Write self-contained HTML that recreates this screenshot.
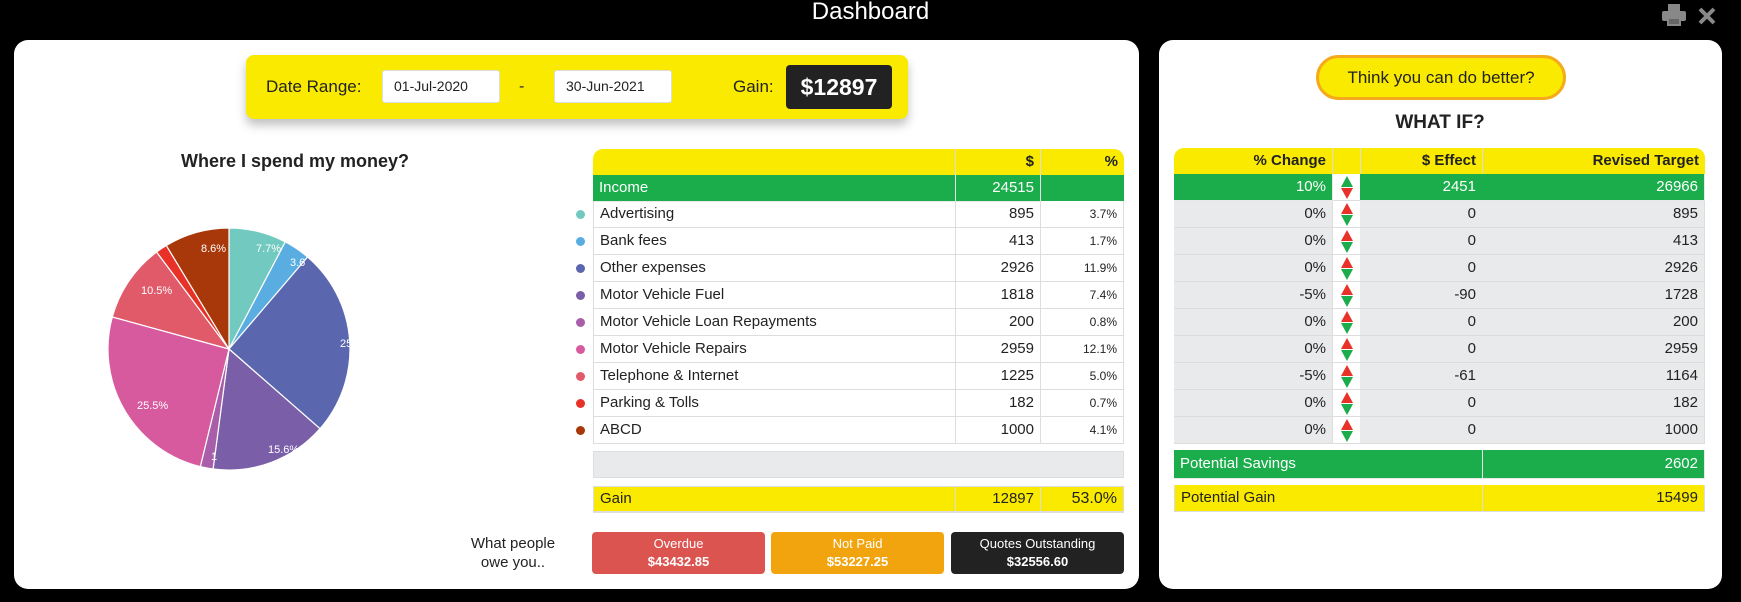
<!DOCTYPE html>
<html><head><meta charset="utf-8"><style>
*{box-sizing:border-box;margin:0;padding:0}
body{width:1741px;height:602px;background:#000;font-family:"Liberation Sans",sans-serif;color:#222;position:relative;overflow:hidden}
.abs{position:absolute}
.panel{position:absolute;background:#fff;border-radius:14px}
.t{position:absolute;font-size:15px;line-height:27px;white-space:nowrap}
.cell{position:absolute;border-right:1px solid #ddd;border-bottom:1px solid #ddd;font-size:15px;line-height:26px;padding:0 6px;white-space:nowrap;overflow:hidden}
.r{text-align:right}
.dot{position:absolute;width:9px;height:9px;border-radius:50%}
.btn{position:absolute;border-radius:4px;color:#fff;text-align:center;font-size:13px;line-height:18px;padding-top:3px}
</style></head><body>
<div class="abs" style="left:0;width:1741px;top:0;text-align:center;color:#fff;font-size:24px;line-height:24px">Dashboard</div>
<svg class="abs" style="left:1662px;top:4px" width="24" height="22" viewBox="0 0 24 22"><rect x="6" y="0" width="12" height="7" fill="#888"/><rect x="0" y="7" width="24" height="10" rx="2" fill="#888"/><rect x="5" y="13" width="14" height="9" fill="#888"/><rect x="7" y="15" width="10" height="5" fill="#000" opacity=".25"/></svg>
<svg class="abs" style="left:1698px;top:7px" width="18" height="18" viewBox="0 0 18 18"><path d="M2 2L16 16M16 2L2 16" stroke="#888" stroke-width="4"/></svg>

<div class="panel" style="left:14px;top:40px;width:1125px;height:549px"></div>
<div class="panel" style="left:1159px;top:40px;width:563px;height:549px"></div>

<div class="abs" style="left:246px;top:55px;width:662px;height:64px;background:#f9ea00;border-radius:8px;box-shadow:0 6px 10px rgba(0,0,0,.25)"></div>
<div class="t" style="left:266px;top:73px;font-size:17px">Date Range:</div>
<div class="abs" style="left:382px;top:70px;width:118px;height:33px;background:#fff;border:1px solid #ddd;border-radius:3px;font-size:14px;line-height:31px;padding-left:11px">01-Jul-2020</div>
<div class="t" style="left:519px;top:73px;font-size:16px">-</div>
<div class="abs" style="left:554px;top:70px;width:118px;height:33px;background:#fff;border:1px solid #ddd;border-radius:3px;font-size:14px;line-height:31px;padding-left:11px">30-Jun-2021</div>
<div class="t" style="left:733px;top:73px;font-size:17px">Gain:</div>
<div class="abs" style="left:786px;top:65px;width:106px;height:44px;background:#222;border-radius:4px;color:#fff;font-size:23px;font-weight:bold;line-height:44px;text-align:center">$12897</div>

<div class="abs" style="left:120px;top:151px;width:350px;text-align:center;font-size:18px;font-weight:bold">Where I spend my money?</div>

<svg class="abs" style="left:90px;top:210px;overflow:hidden" width="262" height="270" viewBox="90 210 262 270">
<g stroke="#fff" stroke-width="1.2">
<path d="M229 349L229 228A121 121 0 0 1 285.3 241.9Z" fill="#72c9c0"/>
<path d="M229 349L285.3 241.9A121 121 0 0 1 307.6 257Z" fill="#5aade0"/>
<path d="M229 349L307.6 257A121 121 0 0 1 320 428.7Z" fill="#5a67ae"/>
<path d="M229 349L320 428.7A121 121 0 0 1 213.1 469Z" fill="#7a5ea8"/>
<path d="M229 349L213.1 469A121 121 0 0 1 200.3 466.6Z" fill="#a85ea8"/>
<path d="M229 349L200.3 466.6A121 121 0 0 1 112.3 317Z" fill="#d85a9e"/>
<path d="M229 349L112.3 317A121 121 0 0 1 156.6 252Z" fill="#e05a6a"/>
<path d="M229 349L156.6 252A121 121 0 0 1 166.3 245.5Z" fill="#e83228"/>
<path d="M229 349L166.3 245.5A121 121 0 0 1 229 228Z" fill="#a8380a"/>
</g>
<g fill="#fff" font-size="11" font-family="Liberation Sans,sans-serif">
<text x="201" y="252">8.6%</text><text x="256" y="252">7.7%</text><text x="290" y="266">3.6</text>
<text x="340" y="347">25.2%</text><text x="268" y="453">15.6%</text><text x="211" y="460">1</text>
<text x="137" y="409">25.5%</text><text x="141" y="294">10.5%</text>
</g></svg>

<div class="abs" style="left:593px;top:149px;width:531px;height:26px;background:#f9ea00;border-radius:10px 10px 0 0"></div>
<div class="abs" style="left:955px;top:149px;width:1px;height:26px;background:#ddd"></div>
<div class="abs" style="left:1040px;top:149px;width:1px;height:26px;background:#ddd"></div>
<div class="t r" style="left:955px;width:79px;top:149px;line-height:26px;font-weight:bold">$</div>
<div class="t r" style="left:1040px;width:78px;top:149px;line-height:26px;font-weight:bold">%</div>
<div class="abs" style="left:593px;top:175px;width:531px;height:26px;background:#1bad4b"></div>
<div class="cell" style="left:593px;top:175px;width:363px;color:#fff;border-color:#e8e8e8">Income</div>
<div class="cell r" style="left:955px;top:175px;width:86px;color:#fff;border-color:#e8e8e8">24515</div>
<div id="lt"></div>

<div class="abs" style="left:593px;top:451px;width:531px;height:27px;background:#e9eaeb;border:1px solid #ddd"></div>
<div class="abs" style="left:593px;top:486px;width:531px;height:26px;background:#f9ea00;border:1px solid #ddd"></div>
<div class="cell" style="left:593px;top:486px;width:363px;border-left:1px solid #ddd">Gain</div>
<div class="cell r" style="left:955px;top:486px;width:86px">12897</div>
<div class="cell r" style="left:1040px;top:486px;width:84px;font-size:16px">53.0%</div>

<div class="abs" style="left:440px;top:534px;width:146px;text-align:center;font-size:15px;line-height:19px">What people<br>owe you..</div>
<div class="btn" style="left:592px;top:532px;width:173px;height:42px;background:#dc5450">Overdue<br><b>$43432.85</b></div>
<div class="btn" style="left:771px;top:532px;width:173px;height:42px;background:#f1a40d">Not Paid<br><b>$53227.25</b></div>
<div class="btn" style="left:951px;top:532px;width:173px;height:42px;background:#222">Quotes Outstanding<br><b>$32556.60</b></div>

<div class="abs" style="left:1316px;top:55px;width:250px;height:45px;background:#f9ea00;border:3px solid #f5aa1c;border-radius:23px;text-align:center;font-size:17px;line-height:39px">Think you can do better?</div>
<div class="abs" style="left:1340px;top:112px;width:200px;text-align:center;font-size:19px;font-weight:bold">WHAT IF?</div>

<div class="abs" style="left:1174px;top:148px;width:531px;height:26px;background:#f9ea00;border-radius:10px 10px 0 0"></div>
<div class="abs" style="left:1332px;top:148px;width:1px;height:26px;background:#ddd"></div>
<div class="abs" style="left:1360px;top:148px;width:1px;height:26px;background:#ddd"></div>
<div class="abs" style="left:1482px;top:148px;width:1px;height:26px;background:#ddd"></div>
<div class="t r" style="left:1174px;width:152px;top:148px;line-height:26px;font-weight:bold">% Change</div>
<div class="t r" style="left:1360px;width:116px;top:148px;line-height:26px;font-weight:bold">$ Effect</div>
<div class="t r" style="left:1482px;width:217px;top:148px;line-height:26px;font-weight:bold">Revised Target</div>
<div id="rt"></div>

<div class="abs" style="left:1174px;top:450px;width:531px;height:28px;background:#1bad4b"></div>
<div class="cell" style="left:1174px;top:450px;width:309px;color:#fff;line-height:28px;border-color:#e8e8e8">Potential Savings</div>
<div class="cell r" style="left:1482px;top:450px;width:223px;color:#fff;line-height:28px;border-color:#e8e8e8">2602</div>
<div class="abs" style="left:1174px;top:485px;width:531px;height:27px;background:#f9ea00"></div>
<div class="cell" style="left:1174px;top:485px;width:309px;border-left:1px solid #ddd">Potential Gain</div>
<div class="cell r" style="left:1482px;top:485px;width:223px">15499</div>

<script>
var L=[["Advertising",895,"3.7%","#72c9c0"],["Bank fees",413,"1.7%","#5aade0"],["Other expenses",2926,"11.9%","#5a67ae"],["Motor Vehicle Fuel",1818,"7.4%","#7a5ea8"],["Motor Vehicle Loan Repayments",200,"0.8%","#a85ea8"],["Motor Vehicle Repairs",2959,"12.1%","#d85a9e"],["Telephone & Internet",1225,"5.0%","#e05a6a"],["Parking & Tolls",182,"0.7%","#e83228"],["ABCD",1000,"4.1%","#a8380a"]];
var h="";
L.forEach(function(r,i){var y=201+i*27;
h+='<div class="dot" style="left:576px;top:'+(y+9)+'px;background:'+r[3]+'"></div>';
h+='<div class="cell" style="left:593px;top:'+y+'px;width:363px;height:27px;border-left:1px solid #ddd">'+r[0].replace("&","&amp;")+'</div>';
h+='<div class="cell r" style="left:955px;top:'+y+'px;width:86px;height:27px">'+r[1]+'</div>';
h+='<div class="cell r" style="left:1040px;top:'+y+'px;width:84px;height:27px;font-size:12px">'+r[2]+'</div>';});
document.getElementById("lt").innerHTML=h;
var R=[["10%",2451,26966],["0%",0,895],["0%",0,413],["0%",0,2926],["-5%",-90,1728],["0%",0,200],["0%",0,2959],["-5%",-61,1164],["0%",0,182],["0%",0,1000]];
h="";
R.forEach(function(r,i){var y=174+i*27,g=i==0,bg=g?"#1bad4b":"#e9eaeb",c=g?"#fff":"#222",bc=g?"#e8e8e8":"#ddd";
var up=g?"#1bad4b":"#e83228",dn=g?"#e83228":"#1bad4b";
h+='<div class="cell r" style="left:1174px;top:'+y+'px;width:159px;height:27px;background:'+bg+';color:'+c+';border-color:'+bc+'">'+r[0]+'</div>';
h+='<div class="abs" style="left:1333px;top:'+y+'px;width:28px;height:27px;background:#fff;border-right:1px solid #ddd;border-bottom:1px solid #ddd"><svg style="position:absolute;left:8px;top:2px" width="12" height="23"><path d="M6 0L12 11H0Z" fill="'+up+'"/><path d="M0 12H12L6 23Z" fill="'+dn+'"/></svg></div>';
h+='<div class="cell r" style="left:1360px;top:'+y+'px;width:123px;height:27px;background:'+bg+';color:'+c+';border-color:'+bc+'">'+r[1]+'</div>';
h+='<div class="cell r" style="left:1482px;top:'+y+'px;width:223px;height:27px;background:'+bg+';color:'+c+';border-color:'+bc+'">'+r[2]+'</div>';});
document.getElementById("rt").innerHTML=h;
</script>
</body></html>
